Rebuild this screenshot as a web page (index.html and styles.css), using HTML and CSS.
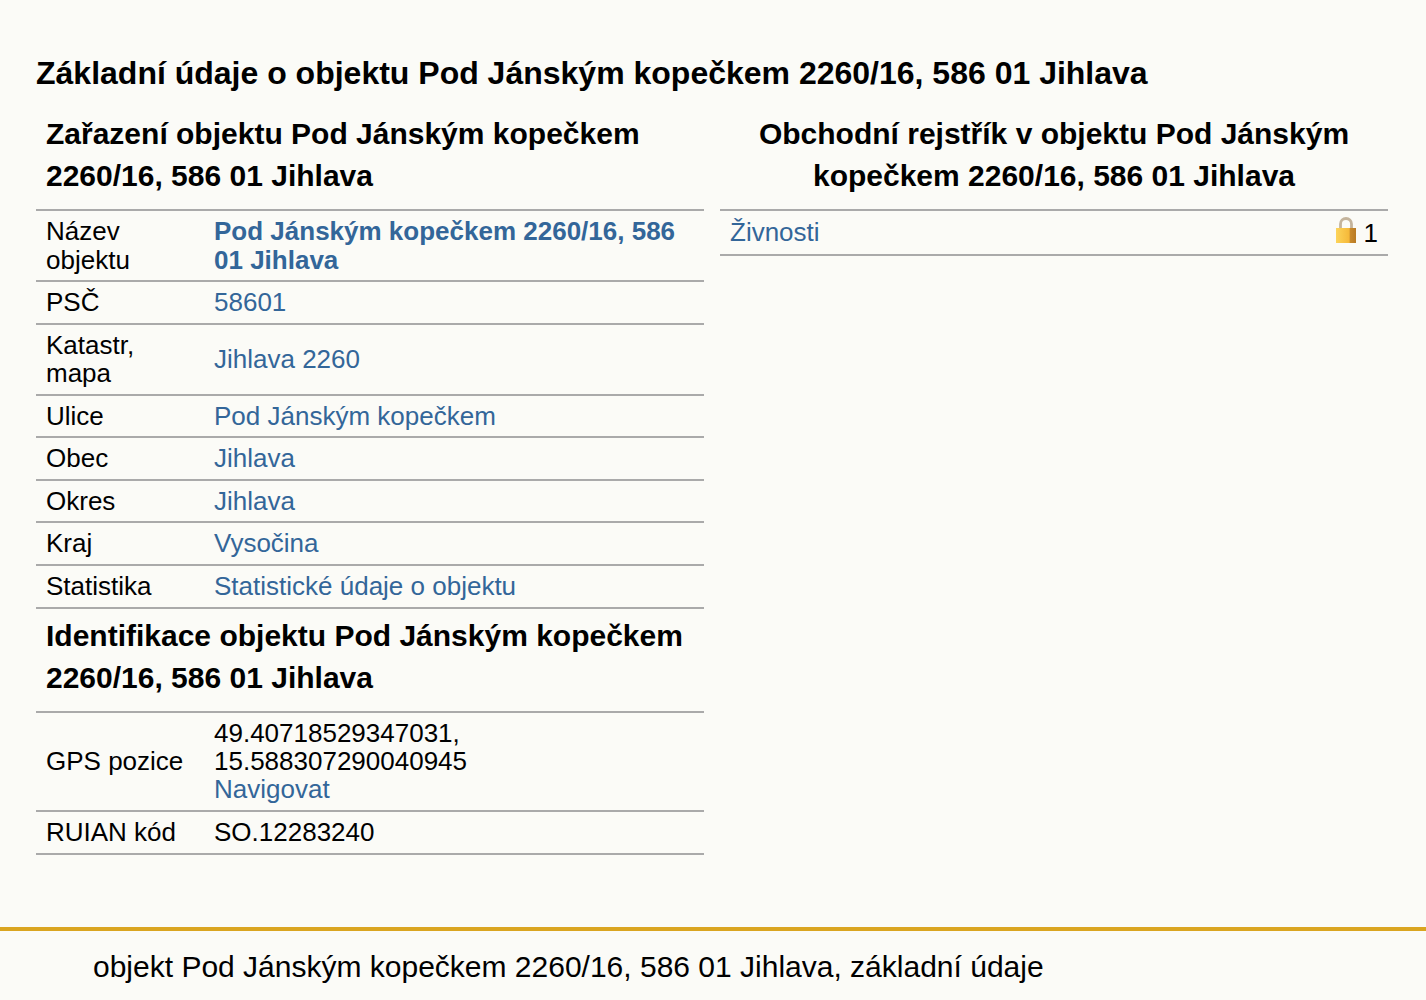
FILE: index.html
```html
<!DOCTYPE html>
<html lang="cs">
<head>
<meta charset="utf-8">
<title>Základní údaje o objektu</title>
<link rel="stylesheet" href="styles.css">
</head>
<body>
<main class="content">
<h1 class="title">Základní údaje o objektu Pod Jánským kopečkem 2260/16, 586 01 Jihlava</h1>
<div class="columns">
<section class="col">
<h2 class="sub">Zařazení objektu Pod Jánským kopečkem 2260/16, 586 01 Jihlava</h2>
<table class="info">
<tr><th>Název objektu</th><td><a class="strong" href="#">Pod Jánským kopečkem 2260/16, 586 01 Jihlava</a></td></tr>
<tr><th>PSČ</th><td><a href="#">58601</a></td></tr>
<tr><th>Katastr, mapa</th><td><a href="#">Jihlava 2260</a></td></tr>
<tr><th>Ulice</th><td><a href="#">Pod Jánským kopečkem</a></td></tr>
<tr><th>Obec</th><td><a href="#">Jihlava</a></td></tr>
<tr><th>Okres</th><td><a href="#">Jihlava</a></td></tr>
<tr><th>Kraj</th><td><a href="#">Vysočina</a></td></tr>
<tr><th>Statistika</th><td><a href="#">Statistické údaje o objektu</a></td></tr>
</table>
<h2 class="sub">Identifikace objektu Pod Jánským kopečkem 2260/16, 586 01 Jihlava</h2>
<table class="info">
<tr><th>GPS pozice</th><td>49.40718529347031, 15.588307290040945<br><a href="#">Navigovat</a></td></tr>
<tr><th>RUIAN kód</th><td>SO.12283240</td></tr>
</table>
</section>
<section class="col">
<h2 class="sub center">Obchodní rejstřík v objektu Pod Jánským kopečkem 2260/16, 586 01 Jihlava</h2>
<div class="reg-row">
<a href="#">Živnosti</a>
<span class="reg-count">
<svg class="lock" width="20" height="26" viewBox="0 0 20 26" aria-hidden="true">
<defs><linearGradient id="g" x1="0" x2="1" y1="0" y2="0"><stop offset="0" stop-color="#fcd45a"/><stop offset=".65" stop-color="#f6b93a"/><stop offset=".72" stop-color="#c98a2c"/><stop offset="1" stop-color="#b87a24"/></linearGradient></defs>
<path d="M4.5 12V7a5.5 5.5 0 0 1 11 0V12" fill="none" stroke="#c4b49c" stroke-width="2.8"/>
<rect x="0" y="11" width="20" height="15" fill="url(#g)"/>
</svg>
<span class="reg-num">1</span></span>
</div>
</section>
</div>
</main>
<footer class="foot">objekt Pod Jánským kopečkem 2260/16, 586 01 Jihlava, základní údaje</footer>
</body>
</html>
```
FILE: styles.css
```css
html, body { margin: 0; padding: 0; }
body {
  background: #fbfbf7;
  color: #000;
  font-family: "Liberation Sans", Arial, sans-serif;
  font-size: 26px;
  height: 1000px;
  overflow: hidden;
  display: flex;
  flex-direction: column;
}
a { color: #336699; text-decoration: none; }
.content { flex: 1; padding: 55px 38px 0 36px; }
.title { margin: 0 0 21px; font-size: 32px; line-height: 37px; font-weight: bold; }
.columns { display: grid; grid-template-columns: 668px 668px; column-gap: 16px; }
.sub { margin: 0; padding: 0 10px 12px; font-size: 30px; line-height: 42px; font-weight: bold; }
.center { text-align: center; }
.info { width: 100%; border-collapse: collapse; table-layout: fixed; border-top: 2px solid #aaa; margin-bottom: 6px; }
.info tr { border-bottom: 2px solid #aaa; }
.info th { width: 148px; padding: 6.1px 10px; font-weight: normal; text-align: left; line-height: 28.4px; }
.info td { padding: 6.1px 10px; line-height: 28.4px; }
.strong { font-weight: bold; }
.reg-row { display: flex; justify-content: space-between; align-items: center; padding: 4px 10px 5px; border-top: 2px solid #aaa; border-bottom: 2px solid #aaa; line-height: 32px; }
.reg-count { display: flex; align-items: center; gap: 8px; }
.lock { margin-top: -5px; }
.reg-num { padding-top: 2px; }
.foot { height: 73px; box-sizing: border-box; border-top: 4px solid #daa520; padding: 18px 0 0 93px; font-size: 30px; line-height: 36px; }
```
